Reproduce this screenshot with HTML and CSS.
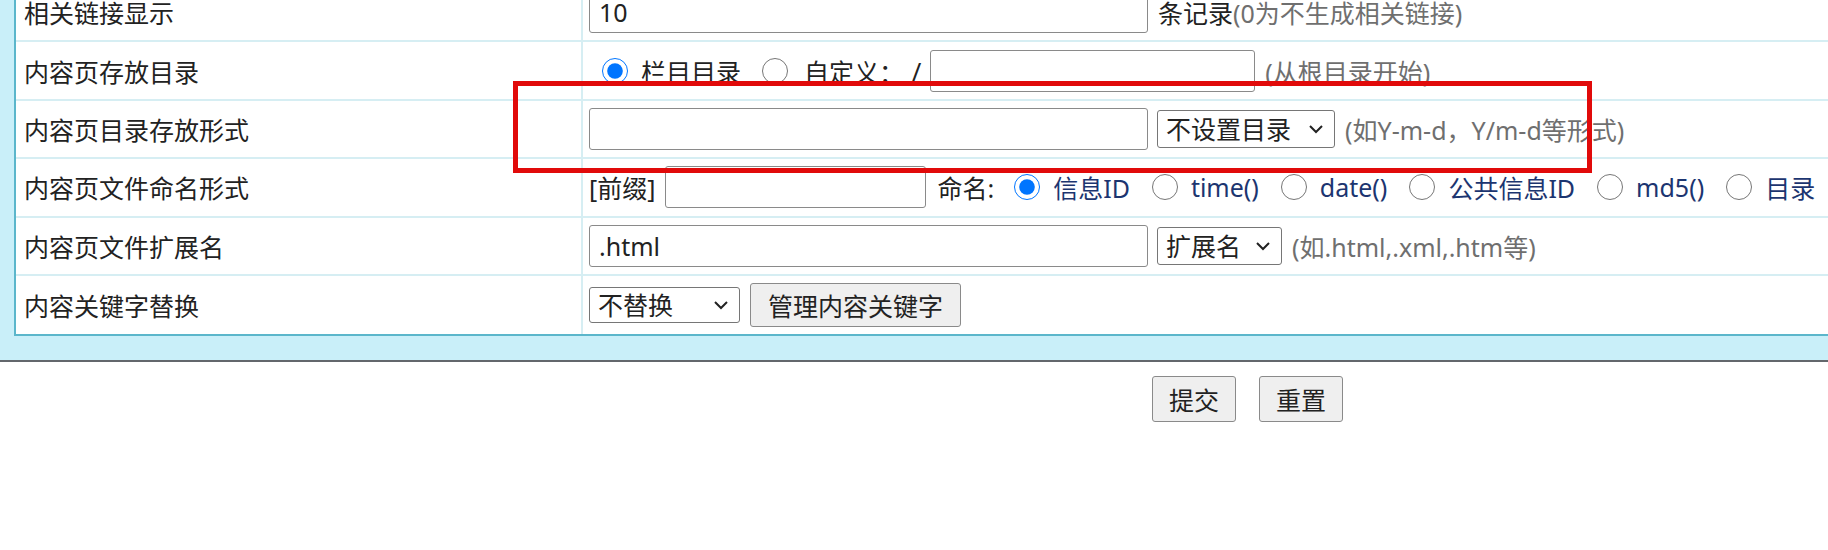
FILE: index.html
```html
<!DOCTYPE html>
<html lang="zh-CN">
<head>
<meta charset="utf-8">
<title>内容页设置</title>
<link rel="stylesheet" href="styles.css">
</head>
<body>
<div class="page">
  <div class="panel">
    <div class="tbl">
      <div class="row">
        <div class="lbl">相关链接显示</div>
        <div class="val">
          <input class="txt wide" type="text" value="10">
          <span class="after">条记录</span><span class="hint">(0为不生成相关链接)</span>
        </div>
      </div>
      <div class="row">
        <div class="lbl">内容页存放目录</div>
        <div class="val">
          <input class="radio first" type="radio" name="dir" checked>
          <span class="rlabel plain">栏目目录</span>
          <input class="radio wideGap" type="radio" name="dir">
          <span class="rlabel plain cust">自定义：</span>
          <span class="slash">/</span>
          <input class="txt mid" type="text">
          <span class="hint after">(从根目录开始)</span>
        </div>
      </div>
      <div class="row">
        <div class="lbl">内容页目录存放形式</div>
        <div class="val">
          <input class="txt wide" type="text">
          <select class="sel dirsel"><option>不设置目录</option></select>
          <span class="hint after">(如Y-m-d，Y/m-d等形式)</span>
        </div>
      </div>
      <div class="row">
        <div class="lbl">内容页文件命名形式</div>
        <div class="val nowrap">
          <span>[前缀]</span>
          <input class="txt short" type="text">
          <span class="naming">命名:</span>
          <input class="radio" type="radio" name="nm" checked>
          <span class="rlabel">信息ID</span>
          <input class="radio" type="radio" name="nm">
          <span class="rlabel">time()</span>
          <input class="radio" type="radio" name="nm">
          <span class="rlabel">date()</span>
          <input class="radio" type="radio" name="nm">
          <span class="rlabel">公共信息ID</span>
          <input class="radio" type="radio" name="nm">
          <span class="rlabel">md5()</span>
          <input class="radio" type="radio" name="nm">
          <span class="rlabel">目录</span>
        </div>
      </div>
      <div class="row">
        <div class="lbl">内容页文件扩展名</div>
        <div class="val">
          <input class="txt wide" type="text" value=".html">
          <select class="sel extsel"><option>扩展名</option></select>
          <span class="hint after">(如.html,.xml,.htm等)</span>
        </div>
      </div>
      <div class="row last">
        <div class="lbl">内容关键字替换</div>
        <div class="val">
          <select class="sel kwsel"><option>不替换</option></select>
          <button class="btn kwbtn" type="button">管理内容关键字</button>
        </div>
      </div>
    </div>
  </div>
  <div class="actions">
    <button class="btn act" type="submit">提交</button>
    <button class="btn act" type="reset">重置</button>
  </div>
</div>
<div class="redbox"></div>
</body>
</html>
```
FILE: styles.css
```css
html, body {
  margin: 0;
  padding: 0;
  overflow: hidden;
  background: #ffffff;
}
body {
  position: relative;
  width: 1828px;
  height: 550px;
  font-family: "Noto Sans", "Noto Sans CJK SC", sans-serif;
  font-size: 25px;
  color: #222222;
}
.page {
  margin-top: -16px;
}
.panel {
  background: #c9eff9;
  padding: 0 0 24px 14px;
  border-bottom: 2px solid #63676c;
}
.tbl {
  width: 2000px;
  background: #ffffff;
  border-left: 2px solid #5bb6cb;
  border-bottom: 2px solid #5bb6cb;
}
.row {
  display: flex;
  height: 56.4px;
  border-bottom: 2px solid #d6eef3;
}
.row.last {
  border-bottom: none;
  height: 58.4px;
}
.lbl {
  width: 557px;
  flex: none;
  padding-left: 8px;
  display: flex;
  align-items: center;
  border-right: 2px solid #d6eef3;
  white-space: nowrap;
}
.val {
  flex: 1;
  display: flex;
  align-items: center;
  padding-left: 6px;
  white-space: nowrap;
}
.txt {
  box-sizing: border-box;
  height: 42px;
  border: 1.5px solid #8a8a8a;
  border-radius: 3px;
  font: inherit;
  color: #222;
  padding: 0 9px;
  margin: 0;
  background: #fff;
}
.wide { width: 559px; }
.mid { width: 325px; margin-left: 9px; }
.short { width: 261px; margin-left: 10px; }
.after { margin-left: 10px; }
.hint { color: #6f6f6f; }
.radio {
  width: 26px;
  height: 26px;
  margin: 0 13px 0 22px;
  flex: none;
}
.radio.first { margin-left: 13px; }
.radio.wideGap { margin-left: 21px; margin-right: 16px; }
.rlabel { color: #1c3570; }
.rlabel.plain { color: #222; }
.slash { margin-left: 8px; }
.naming { margin-left: 11px; margin-right: -2px; }
.sel {
  box-sizing: border-box;
  -webkit-appearance: none;
  appearance: none;
  height: 38px;
  border: 1.5px solid #767676;
  border-radius: 3px;
  font: inherit;
  color: #222;
  background-color: #fff;
  background-image: url("data:image/svg+xml;utf8,<svg xmlns='http://www.w3.org/2000/svg' width='16' height='10' viewBox='0 0 16 10'><path d='M2 2 L8 8 L14 2' fill='none' stroke='%23222' stroke-width='2'/></svg>");
  background-repeat: no-repeat;
  background-position: right 10px center;
  background-size: 16px 10px;
  margin: 0 0 0 9px;
  padding: 0 30px 0 8px;
  line-height: 34px;
}
.dirsel { width: 178px; }
.extsel { width: 125px; }
.kwsel { width: 151px; margin-left: 0; height: 36px; }
.btn {
  box-sizing: border-box;
  font: inherit;
  color: #222;
  background: #efefef;
  border: 1.5px solid #8a8a8a;
  border-radius: 3px;
  padding: 0;
  margin: 0;
}
.kwbtn {
  width: 211px;
  height: 44px;
  margin-left: 10px;
}
.actions {
  display: flex;
  gap: 23px;
  padding: 14px 0 0 1152px;
}
.act {
  width: 84px;
  height: 46px;
}
.redbox {
  position: absolute;
  left: 513px;
  top: 81px;
  width: 1079px;
  height: 92px;
  box-sizing: border-box;
  border: 5px solid #e10a0a;
  pointer-events: none;
}
```
